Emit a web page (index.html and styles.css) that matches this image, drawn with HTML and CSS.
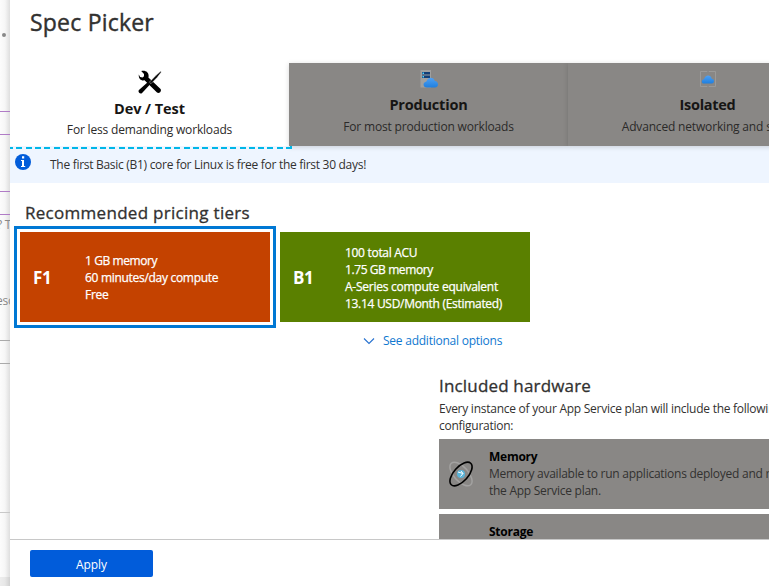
FILE: index.html
```html
<!DOCTYPE html>
<html lang="en">
<head>
<meta charset="utf-8">
<title>Spec Picker</title>
<link rel="stylesheet" href="styles.css">
</head>
<body>
<div class="app">
  <aside class="behind">
    <i class="dot"></i>
    <i class="rule r1"></i><i class="rule r2"></i><i class="rule r3"></i><i class="rule r4"></i>
    <span class="peek p1">? T</span>
    <span class="peek p2">eso</span>
    <i class="rule g1"></i><i class="rule g2"></i><i class="rule g3"></i>
    <i class="foot"></i>
  </aside>
  <main class="panel">
    <h1 class="title">Spec Picker</h1>
    <nav class="tabs">
      <div class="tab active">
        <svg class="tab-icon" viewBox="0 0 24 24"><path d="M3.2 1.1 6 4v2.200L4.600 7.600 2.100 7 .8 4.600C.4 8 2.600 11 6.500 10.300L19 22.600c2 1.400 5-1 3.600-3.600L10.400 7.600C11.500 3.500 8.500-.2 3.200 1.100Z" fill="#000"/><path d="M22.600 1.300l.7.700-4 5.200-6.300 6.500-1.600-1.500 6.500-6.600Z" fill="#000" stroke="#fff" stroke-width=".4"/><path d="M9.400 12.500l2.300 2.300-7.600 8.100c-2 1.600-4.600-.9-3.200-3Z" fill="#000"/></svg>
        <b>Dev / Test</b>
        <p>For less demanding workloads</p>
      </div>
      <div class="tab">
        <svg class="tab-icon" viewBox="0 0 24 24"><defs><linearGradient id="cloud" x2="0" y2="1"><stop stop-color="#4fa1f4"/><stop offset="1" stop-color="#1f7fdf"/></linearGradient></defs><path d="M3.500 2H14v17.500H3.500z" fill="#a0a09f"/><path d="M5 4h8v2.600H5zM5 7.600h8v2.400H5z" fill="#123f77"/><path d="M5.500 4.600h1.500v1.400H5.500zM5.500 8h1.500v1.400H5.500z" fill="#50d5ff"/><path d="M10 19.500c-4.500 0-4.500-5.500-.6-6 1-4.900 7.400-5 8.400-.6 4.200.1 4.500 6.600 0 6.600Z" fill="url(#cloud)"/></svg>
        <b class="production">Production</b>
        <p>For most production workloads</p>
      </div>
      <div class="tab">
        <svg class="tab-icon" viewBox="0 0 24 24"><path d="M4.500 3.500h15v15h-15z" fill="none" stroke="#9b9a99"/><path d="M12 3v2M12 17v2" stroke="#898785" stroke-width="1.500"/><path d="M8 15.500c-3 0-3-4 0-4.300 1-5 7-5 7.700-.5 3.100.2 3.100 4.800 0 4.800Z" fill="url(#cloud)"/></svg>
        <b class="isolated">Isolated</b>
        <p>Advanced networking and scale</p>
      </div>
    </nav>
    <div class="banner">
      <svg class="info" viewBox="0 0 16 16"><circle cx="8" cy="8" r="8" fill="#015cda"/><path d="M7 2.300h2.200v2.100H7zM6 6h3v6h1.200v1H6v-1h1V7H6z" fill="#fff"/></svg>
      <span>The first Basic (B1) core for Linux is free for the first 30 days!</span>
    </div>
    <section class="content">
      <h2>Recommended pricing tiers</h2>
      <div class="tiers">
        <div class="tier selected"><strong>F1</strong><ul><li class="tight">1 GB memory</li><li>60 minutes/day compute</li><li>Free</li></ul></div>
        <div class="tier green"><strong>B1</strong><ul><li>100 total ACU</li><li class="tight">1.75 GB memory</li><li class="loose">A-Series compute equivalent</li><li>13.14 USD/Month (Estimated)</li></ul></div>
      </div>
      <a class="more"><svg viewBox="0 0 12 12"><path d="M1 3.500 6 8.500l5-5" fill="none" stroke="#2671cf" stroke-width="1.100"/></svg><span>See additional options</span></a>
      <div class="hardware">
        <h2>Included hardware</h2>
        <p class="intro">Every instance of your App Service plan will include the following<br>configuration:</p>
        <article class="card">
          <svg class="atom" viewBox="0 0 26 26"><g fill="none"><ellipse cx="13" cy="13" rx="14.500" ry="7.200" transform="rotate(48 13 13)" stroke="#a3a2a1" stroke-width="1.500"/><circle cx="13" cy="13" r="4" fill="#59b4d9"/><path d="M10 11l5 1.500-2.500 3M13 10l2 2.500" stroke="#fff"/><ellipse cx="13" cy="13" rx="14.500" ry="7.200" transform="rotate(-48 13 13)" stroke="#000" stroke-width="1.600"/></g></svg>
          <div><h3>Memory</h3><p>Memory available to run applications deployed and running in<br>the App Service plan.</p></div>
        </article>
        <article class="card">
          <div class="atom"></div>
          <div><h3>Storage</h3></div>
        </article>
      </div>
    </section>
    <footer><button>Apply</button></footer>
  </main>
</div>
</body>
</html>
```
FILE: styles.css
```css
* { box-sizing: border-box; }
body { margin: 0; font: 12px/17px "Open Sans", "Noto Sans", sans-serif; letter-spacing: -.26px; color: #323130; background: #fff; overflow: hidden; }
h1, h2, h3, p, ul { margin: 0; padding: 0; }
ul { list-style: none; }
.app { display: flex; width: 769px; height: 586px; overflow: hidden; }
.behind { position: relative; flex: 0 0 10px; overflow: hidden; background: linear-gradient(90deg, #fcfcfc, #f6f6f6 50%, #dedede); color: #888; }
.dot { position: absolute; left: 2px; top: 33px; width: 4px; height: 4px; border-radius: 50%; background: #888; }
.rule { position: absolute; left: 0; width: 10px; height: 1px; background: #b07cc6; }
.r1 { top: 111px; } .r2 { top: 134px; } .r3 { top: 191px; } .r4 { top: 214px; }
.g1 { top: 340px; background: #aaa; } .g2 { top: 363px; background: #aaa; } .g3 { top: 512px; background: #c8c8c8; }
.peek { position: absolute; white-space: nowrap; }
.p1 { left: -3px; top: 216px; } .p2 { left: -4px; top: 292px; }
.foot { position: absolute; left: 0; top: 577px; width: 10px; height: 9px; background: rgba(0, 0, 0, .06); }
.panel { flex: 1; min-width: 0; display: flex; flex-direction: column; background: #fff; }
.title { height: 63px; padding: 6px 0 0 20px; font-size: 23px; line-height: 32px; font-weight: 400; letter-spacing: .21px; -webkit-text-stroke: .4px #323130; }
.tabs { display: flex; height: 83px; flex: none; position: relative; z-index: 1; }
.tab { position: relative; flex: 0 0 279px; display: flex; flex-direction: column; align-items: center; background: #898785; box-shadow: 0 1px 5px rgba(0, 0, 0, .16); white-space: nowrap; }
.tab b { font-size: 14.5px; line-height: 20px; letter-spacing: -.05px; color: #161514; margin-top: 3px; }
.tab b.production { letter-spacing: -.2px; }
.tab b.isolated { letter-spacing: -.27px; }
.tab p { color: #2b2a29; margin-top: 3px; letter-spacing: -.17px; }
.tab-icon { width: 24px; height: 24px; margin-top: 5px; flex: none; }
.tab.active { background: #fff; box-shadow: none; }
.active .tab-icon { margin-top: 7px; }
.tab.active b { margin-top: 5px; }
.tab.active p { margin-top: 2px; }
.tab.active::before { content: ""; position: absolute; z-index: 1; left: 0; top: 84px; width: 282px; height: 2px; background: repeating-linear-gradient(90deg, #00b7e8 0 6px, transparent 6px 9.3px) -3px 0 / 290px 2px no-repeat; }
.tab.active::after { content: ""; position: absolute; z-index: 1; left: 280px; top: 83px; width: 2px; height: 3px; background: #00b7e8; }
.banner { flex: none; display: flex; height: 37px; padding: 8px 0 0 5px; background: #eef5ff; white-space: nowrap; letter-spacing: -.29px; }
.info { width: 16px; height: 16px; margin-right: 19px; }
.banner span { padding-top: 2px; }
.content { flex: 1; min-height: 0; overflow: hidden; }
h2 { font-size: 17px; line-height: 24px; font-weight: 400; letter-spacing: .29px; -webkit-text-stroke: .3px #323130; white-space: nowrap; }
.content > h2 { padding: 18px 0 0 15px; }
.tiers { display: flex; gap: 10px; padding: 7px 0 0 10px; }
.tier { display: flex; align-items: center; width: 250px; height: 90px; padding: 1px 0 0 13px; color: #fff; letter-spacing: -.3px; -webkit-text-stroke: .25px #fff; white-space: nowrap; background: #c44200; }
.tier.green { background: #5a8000; }
.tier strong { width: 52px; font-size: 17px; line-height: 24px; -webkit-text-stroke: 0; }
.tight { letter-spacing: -.41px; }
.loose { letter-spacing: -.25px; }
.selected { box-shadow: 0 0 0 3px #fff, 0 0 0 6px #0078d4; }
.more { display: flex; align-items: center; gap: 8px; height: 17px; margin: 10px 0 0 353px; color: #0f78d0; letter-spacing: -.24px; }
.more svg { width: 12px; height: 12px; }
.hardware { width: 500px; margin: 25px 0 0 429px; white-space: nowrap; }
.hardware h2 { letter-spacing: .17px; }
.intro { margin: 2px 0 5px; }
.card { display: flex; height: 70px; margin-bottom: 5px; padding: 9px 0 0 9px; background: #898785; }
.card h3 { font-size: 12px; line-height: 17px; color: #000; }
.atom { width: 26px; height: 26px; margin: 13px 15px 0 0; overflow: visible; }
footer { flex: 0 0 47px; border-top: 1px solid #c8c8c8; padding: 10px 0 0 20px; }
button { width: 123px; height: 27px; padding: 2px 0 0; border: 0; border-radius: 2px; background: #015cda; color: #fff; font: inherit; letter-spacing: -.05px; }
```
